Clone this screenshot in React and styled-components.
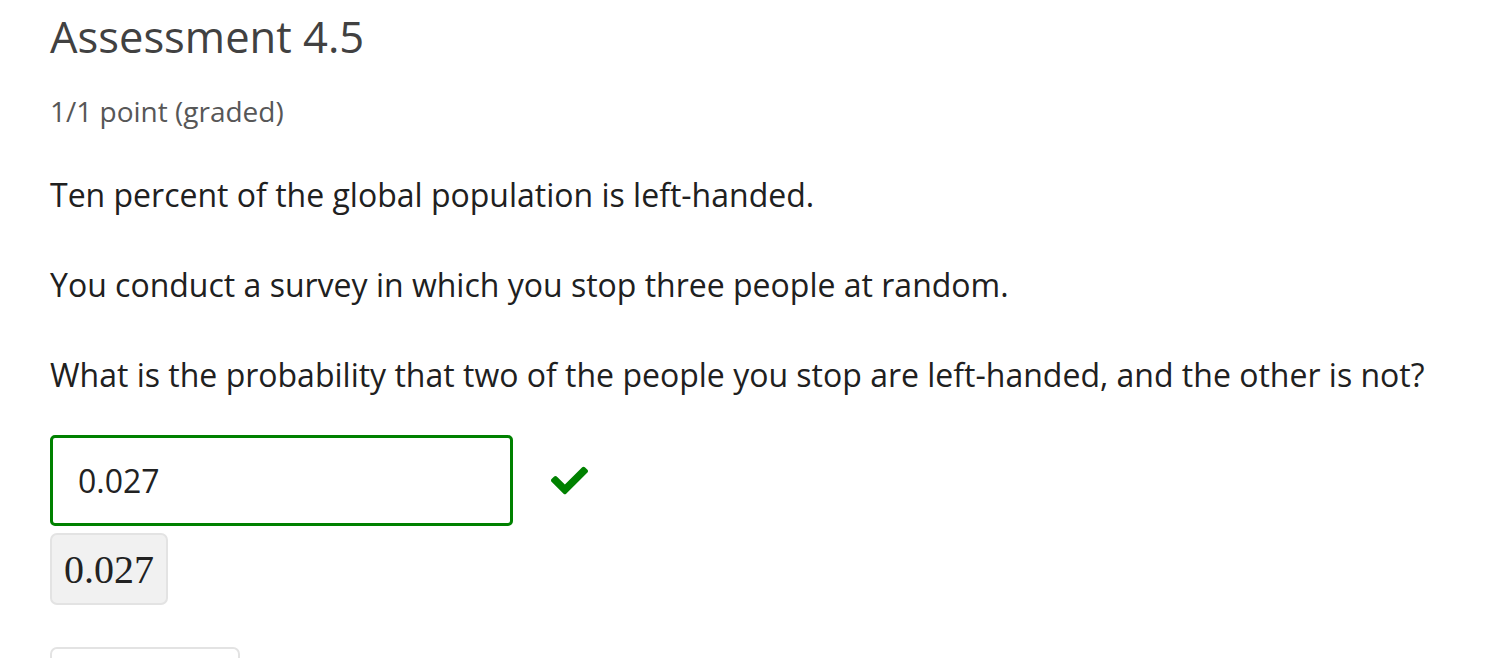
import React from 'react';
import styled, { createGlobalStyle } from 'styled-components';
import { FaCheck } from 'react-icons/fa';

const GlobalStyle = createGlobalStyle`
  body {
    margin: 0;
    background: #fff;
    font-family: 'Open Sans', 'Noto Sans', sans-serif;
  }
`;

const Container = styled.section`
  padding: 10px 0 0 50px;
  overflow: hidden;
  height: 658px;
  box-sizing: border-box;
`;

const Title = styled.h2`
  margin: 0;
  font-size: 43.5px;
  font-weight: 400;
  line-height: 54px;
  color: #414141;
`;

const Points = styled.div`
  margin-top: 29px;
  font-size: 28px;
  line-height: 36px;
  color: #575757;
`;

const Paragraph = styled.p`
  margin: 0;
  margin-top: ${({ first }) => (first ? '44px' : '46px')};
  font-size: 32px;
  line-height: 44px;
  color: #202020;
`;

const AnswerRow = styled.div`
  display: flex;
  align-items: center;
  margin-top: 38px;
`;

const AnswerInput = styled.div`
  box-sizing: border-box;
  width: 463px;
  height: 91px;
  border: 3px solid #008100;
  border-radius: 5px;
  padding: 0 25px;
  display: flex;
  align-items: center;
  font-size: 32px;
  color: #222;
`;

const CheckIcon = styled(FaCheck)`
  margin-left: 38px;
  width: 37px;
  height: 37px;
  color: #008100;
`;

const MathPreview = styled.div`
  display: inline-flex;
  align-items: center;
  box-sizing: border-box;
  margin-top: 7px;
  height: 72px;
  padding: 0 12px;
  background: #f1f1f1;
  border: 2px solid #e3e3e3;
  border-radius: 7px;
  font-family: 'Liberation Serif', 'DejaVu Serif', serif;
  font-size: 40px;
  color: #222;
`;

const SubmitButton = styled.div`
  box-sizing: border-box;
  margin-top: 42px;
  width: 190px;
  height: 60px;
  border: 2px solid #e3e3e3;
  border-radius: 7px;
  background: #fff;
`;

const App = () => (
  <Container>
    <GlobalStyle />
    <Title>Assessment 4.5</Title>
    <Points>1/1 point (graded)</Points>
    <Paragraph first>Ten percent of the global population is left-handed.</Paragraph>
    <Paragraph>You conduct a survey in which you stop three people at random.</Paragraph>
    <Paragraph>What is the probability that two of the people you stop are left-handed, and the other is not?</Paragraph>
    <AnswerRow>
      <AnswerInput>0.027</AnswerInput>
      <CheckIcon />
    </AnswerRow>
    <MathPreview>0.027</MathPreview>
    <SubmitButton />
  </Container>
);

export default App;
